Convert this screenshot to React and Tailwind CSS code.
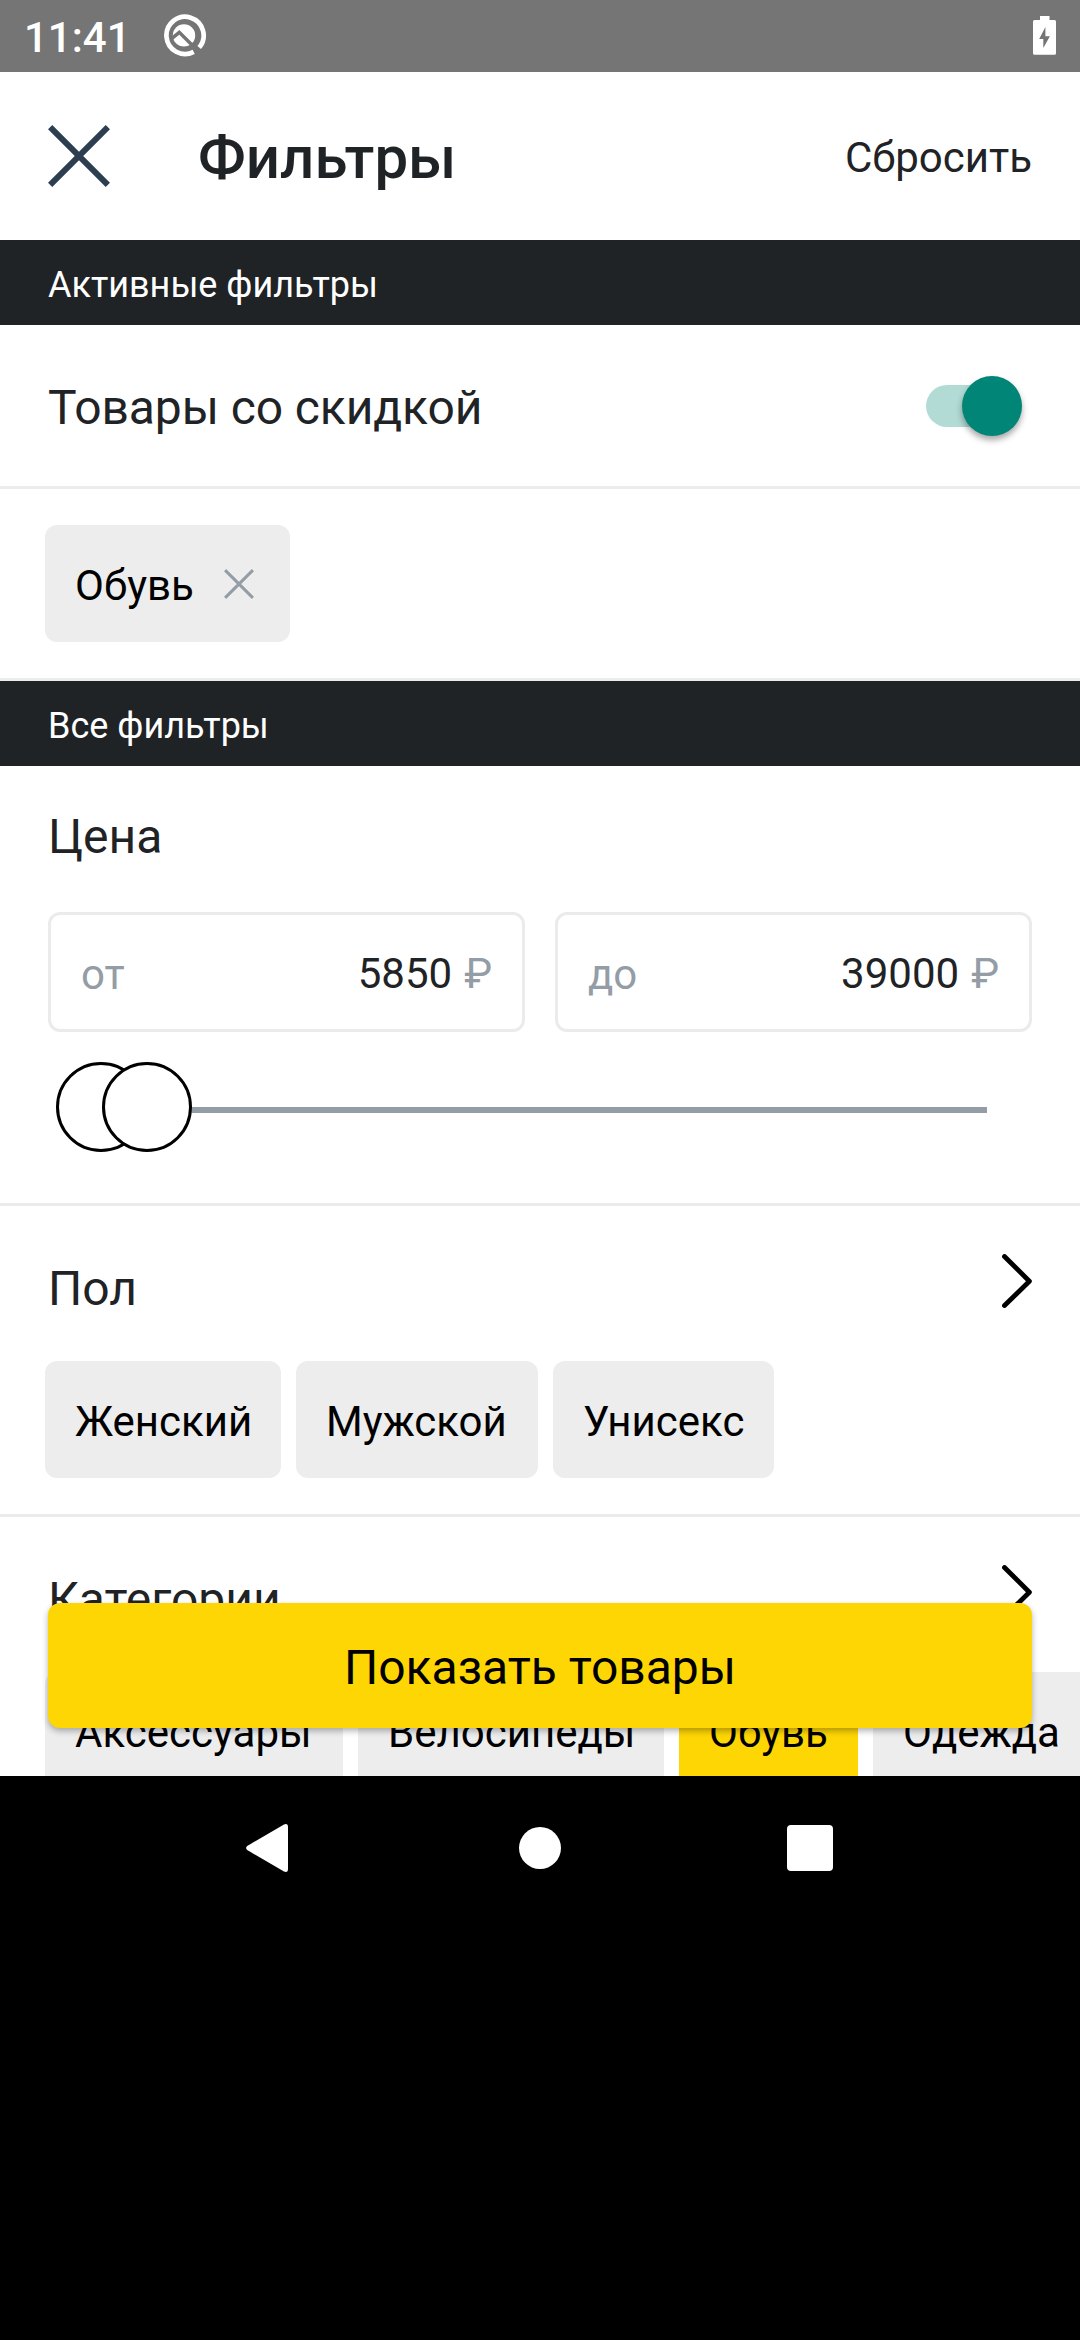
const Cross = ({ className, size, width }) => (
  <svg className={className} viewBox={`0 0 ${size} ${size}`} width={size} height={size} fill="none" stroke="currentColor" strokeWidth={width}>
    <path d={`M${width * 0.36} ${width * 0.36}L${size - width * 0.36} ${size - width * 0.36}M${size - width * 0.36} ${width * 0.36}L${width * 0.36} ${size - width * 0.36}`} />
  </svg>
);

const Chevron = () => (
  <svg className="mt-12 h-[54px] w-[30px]" viewBox="0 0 30 54" fill="none" stroke="#000" strokeWidth="4.8" strokeLinecap="round" strokeLinejoin="round">
    <path d="M2.5 2.5 27.4 27.2 2.5 51.5" />
  </svg>
);

const StatusBar = () => (
  <div className="flex h-[72px] shrink-0 items-start bg-[#757575] text-white">
    <span className="ml-6 mt-[2px] w-[106px] text-[42px] leading-[72px] font-medium">11:41</span>
    <svg className="mt-[14px] ml-[33px] h-11 w-11" viewBox="0 0 44 44" fill="none">
      <path d="M36.2 33.5A18.6 18.6 0 1 0 30.7 37.9" stroke="#fff" strokeWidth="4.7" />
      <circle cx="21" cy="21.4" r="11.2" fill="#fff" />
      <path d="M8 25.2 16.3 18.3 34.5 36.5" stroke="#757575" strokeWidth="3.5" />
    </svg>
    <svg className="mt-4 mr-6 ml-auto h-[39px] w-[23px]" viewBox="0 0 23 39">
      <path d="M7 0H16.5V4H21.5Q23 4 23 5.5V37.3Q23 38.8 21.5 38.8H1.5Q0 38.8 0 37.3V5.5Q0 4 1.5 4H7Z" fill="#fff" />
      <path d="M12.4 11V20.3H16.9L10.3 32V23H6.2Z" fill="#757575" />
    </svg>
  </div>
);

const Band = ({ children }) => (
  <div className="h-[85px] shrink-0 bg-[#1f2326] px-12 pt-[3px] text-[36px] leading-[85px] text-white">{children}</div>
);

const Chip = ({ children, active, width = "" }) => (
  <div className={`flex h-[117px] shrink-0 items-center rounded-xl pl-[30px] text-[42px] whitespace-nowrap text-black ${width} ${active ? "bg-[#fed604]" : "bg-[#ededed]"}`}>
    {children}
  </div>
);

const PriceField = ({ label, value }) => (
  <div className="flex h-[120px] flex-1 items-center rounded-xl border-[3px] border-[#ebebeb] px-[30px] pt-[3px] text-[42px] text-[#949da5]">
    <span className="pt-[2px]">{label}</span>
    <span className="ml-auto text-[#1f2326]">{value}</span>
    <span className="ml-3">₽</span>
  </div>
);

const Section = ({ title, items, selected }) => (
  <section className="h-[311px] shrink-0 border-b-[3px] border-[#ebebeb]">
    <div className="flex h-[155px] justify-between px-12">
      <h2 className="mt-[55px] text-[48px] leading-[56px]">{title}</h2>
      <Chevron />
    </div>
    <div className="flex gap-[15px] pl-[45px]">
      {items.map(([name, width]) => (
        <Chip key={name} width={width} active={name === selected}>
          <span className="pt-1">{name}</span>
        </Chip>
      ))}
    </div>
  </section>
);

const genders = [
  ["Женский", "w-[236px]"],
  ["Мужской", "w-[242px]"],
  ["Унисекс", "w-[221px]"],
];

const categories = [
  ["Аксессуары", "w-[298px]"],
  ["Велосипеды", "w-[306px]"],
  ["Обувь", "w-[179px]"],
  ["Одежда", "w-[216px]"],
];

export default function App() {
  return (
    <div className="flex h-[2340px] w-[1080px] flex-col overflow-hidden bg-black font-[Roboto,sans-serif] text-[#1f2326]">
      <main className="relative flex h-[1776px] shrink-0 flex-col overflow-hidden bg-white">
        <StatusBar />
        <header className="flex h-[168px] shrink-0 items-center px-12">
          <Cross className="mb-px text-[#2c3e50]" size={62} width={6} />
          <h1 className="ml-[88px] pt-[3px] text-[60px] leading-[70px] font-medium">Фильтры</h1>
          <span className="ml-auto pt-[3px] text-[42px]">Сбросить</span>
        </header>
        <Band>Активные фильтры</Band>
        <div className="flex h-[164px] shrink-0 items-center justify-between border-b-[3px] border-[#ebecec] pr-[58px] pl-12">
          <span className="pt-[5px] text-[48px] tracking-[-0.1px]">Товары со скидкой</span>
          <div className="flex h-[42px] w-[96px] items-center justify-end rounded-full bg-[#b2dbd6]">
            <div className="h-[60px] w-[60px] shrink-0 rounded-full bg-[#008577] shadow-[0_4px_6px_rgba(0,0,0,0.35)]" />
          </div>
        </div>
        <div className="h-[192px] shrink-0 border-b-[3px] border-[#ebecec] pt-9 pl-[45px]">
          <div className="flex">
            <Chip width="w-[245px]">
              <span className="pt-1">Обувь</span>
              <Cross className="mr-9 ml-auto text-[#949da5]" size={30} width={3} />
            </Chip>
          </div>
        </div>
        <Band>Все фильтры</Band>
        <section className="h-[440px] shrink-0 border-b-[3px] border-[#ebebeb]">
          <h2 className="h-[146px] px-12 pt-[43px] text-[48px] leading-[56px]">Цена</h2>
          <div className="flex gap-[30px] px-12">
            <PriceField label="от" value="5850" />
            <PriceField label="до" value="39000" />
          </div>
          <div className="mt-[30px] ml-14 flex h-[90px] w-[931px] items-center">
            <div className="h-[90px] w-[90px] shrink-0 rounded-full border-[3px] border-black bg-white" />
            <div className="relative -ml-11 h-[90px] w-[90px] shrink-0 rounded-full border-[3px] border-black bg-white" />
            <div className="mt-[6px] h-[6px] flex-1 bg-[#949da5]" />
          </div>
        </section>
        <Section title="Пол" items={genders} />
        <Section title="Категории" items={categories} selected="Обувь" />
        <button className="absolute bottom-12 left-12 h-[125px] w-[984px] rounded-xl bg-[#fed604] pt-[5px] text-[48px] text-black shadow-[0_3px_6px_rgba(0,0,0,0.3)]">
          Показать товары
        </button>
      </main>
      <nav className="grid h-36 grid-cols-4 items-center">
        <svg className="col-start-1 ml-[246px] h-12 w-[42px]" viewBox="0 0 42 48" fill="#fff">
          <path d="M1.2 22 38 .5Q42-1 42 3V45Q42 49 38 47.5L1.2 26Q-1 24 1.2 22Z" />
        </svg>
        <div className="col-start-2 ml-[249px] h-[42px] w-[42px] rounded-full bg-white" />
        <div className="col-start-3 ml-[247px] h-[46px] w-[46px] rounded bg-white" />
      </nav>
    </div>
  );
}
